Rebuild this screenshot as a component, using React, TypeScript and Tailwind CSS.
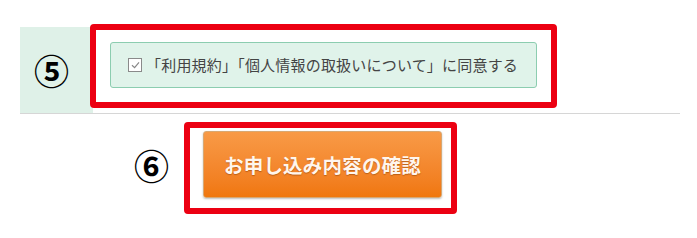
import React from "react";

export default function App() {
  const jp = { fontFamily: '"Noto Sans CJK JP", "Noto Sans", sans-serif' };
  return (
    <div className="relative w-[697px] h-[238px] bg-white overflow-hidden" style={jp}>
      <div className="ml-[20px] mt-[27px] w-[660px] flex border-b border-[#d6d6d6]">
        <div className="w-[73px] h-[86px] bg-[#dff1e8] flex items-center justify-center pr-[10px] pb-[2px]">
          <span className="text-[35px] font-bold text-black leading-none">⑤</span>
        </div>
        <div className="flex-1 pl-[17px] pt-[15px]">
          <div className="w-[427px] h-[46px] border border-[#8ccdb0] bg-[#e0f3ea] rounded-[3px] flex items-center pl-[17px]">
            <span className="w-[14px] h-[14px] border border-[#8a8a8a] bg-white flex items-center justify-center">
              <svg width="11" height="10" viewBox="0 0 11 10">
                <path d="M2 5.2 L4.6 7.6 L9 2.4" fill="none" stroke="#888" strokeWidth="1.2" />
              </svg>
            </span>
            <span className="ml-[4px] text-[15px] text-[#444] leading-none tracking-[0.2px] pb-[1px]">
              「利用規約」「個人情報の取扱いについて」に同意する
            </span>
          </div>
        </div>
      </div>

      <div className="flex items-center mt-[17px] ml-[134px]">
        <span className="text-[35px] font-bold text-black leading-none w-[69px]">⑥</span>
        <button
          className="w-[239px] h-[67px] rounded-[3px] border border-[#d8a872] bg-gradient-to-b from-[#f89a46] to-[#f0770c] shadow-[0_1px_2px_rgba(0,0,0,0.25)] flex items-center justify-center"
        >
          <span className="text-[19.5px] font-bold text-[#fff6ee] tracking-[0.2px] [text-shadow:0_1px_1px_rgba(120,50,0,0.45)]">
            お申し込み内容の確認
          </span>
        </button>
      </div>

      <div className="absolute left-[90px] top-[24px] w-[467px] h-[84px] border-[6px] border-[#ec0012] rounded-[4px]" />
      <div className="absolute left-[184px] top-[122px] w-[273px] h-[92px] border-[6px] border-[#ec0012] rounded-[4px]" />
    </div>
  );
}
